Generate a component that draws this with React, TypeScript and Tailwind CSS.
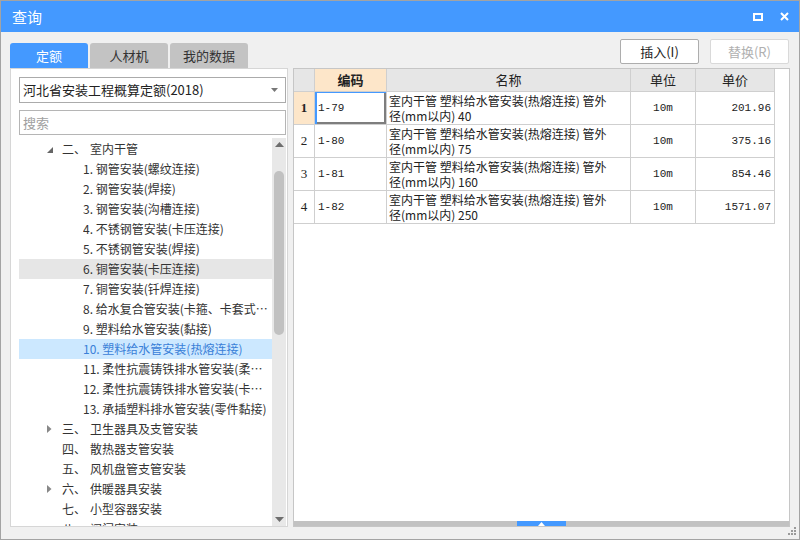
import React from "react";

const FONT = { fontFamily: '"Noto Sans CJK SC", "Noto Sans", sans-serif' };
const MONO = { fontFamily: '"Liberation Mono", "Noto Sans CJK SC", monospace' };

type Row =
  | { kind: "ch"; num: string; text: string; exp: "open" | "closed" | "none" }
  | { kind: "item"; text: string; state?: "hover" | "sel" };

const tree: Row[] = [
  { kind: "ch", num: "二、", text: "室内干管", exp: "open" },
  { kind: "item", text: "1. 钢管安装(螺纹连接)" },
  { kind: "item", text: "2. 钢管安装(焊接)" },
  { kind: "item", text: "3. 钢管安装(沟槽连接)" },
  { kind: "item", text: "4. 不锈钢管安装(卡压连接)" },
  { kind: "item", text: "5. 不锈钢管安装(焊接)" },
  { kind: "item", text: "6. 铜管安装(卡压连接)", state: "hover" },
  { kind: "item", text: "7. 铜管安装(钎焊连接)" },
  { kind: "item", text: "8. 给水复合管安装(卡箍、卡套式连接)" },
  { kind: "item", text: "9. 塑料给水管安装(黏接)" },
  { kind: "item", text: "10. 塑料给水管安装(热熔连接)", state: "sel" },
  { kind: "item", text: "11. 柔性抗震铸铁排水管安装(柔性接口)" },
  { kind: "item", text: "12. 柔性抗震铸铁排水管安装(卡箍连接)" },
  { kind: "item", text: "13. 承插塑料排水管安装(零件黏接)" },
  { kind: "ch", num: "三、", text: "卫生器具及支管安装", exp: "closed" },
  { kind: "ch", num: "四、", text: "散热器支管安装", exp: "none" },
  { kind: "ch", num: "五、", text: "风机盘管支管安装", exp: "none" },
  { kind: "ch", num: "六、", text: "供暖器具安装", exp: "closed" },
  { kind: "ch", num: "七、", text: "小型容器安装", exp: "none" },
  { kind: "ch", num: "八、", text: "阀门安装", exp: "none" },
];

const data = [
  { code: "1-79", d: "40", price: "201.96" },
  { code: "1-80", d: "75", price: "375.16" },
  { code: "1-81", d: "160", price: "854.46" },
  { code: "1-82", d: "250", price: "1571.07" },
];

function TreeRow({ r }: { r: Row }) {
  if (r.kind === "ch") {
    return (
      <div className="h-[20px] flex items-center pl-[28px] text-[12px] text-[#333] whitespace-nowrap">
        <div className="w-[15px] h-[20px] flex items-center">
          {r.exp === "open" && (
            <svg width="6" height="6" viewBox="0 0 6 6" className="mt-[1px]">
              <path d="M6 0 L6 6 L0 6 Z" fill="#666" />
            </svg>
          )}
          {r.exp === "closed" && (
            <svg width="5" height="8" viewBox="0 0 5 8">
              <path d="M0 0 L4.5 4 L0 8 Z" fill="#888" />
            </svg>
          )}
        </div>
        <span className="w-[28px]">{r.num}</span>
        <span>{r.text}</span>
      </div>
    );
  }
  const bg =
    r.state === "hover" ? "bg-[#e6e6e6]" : r.state === "sel" ? "bg-[#cce8ff]" : "";
  const color = r.state === "sel" ? "text-[#3a80d8]" : "text-[#333]";
  return (
    <div className={`h-[20px] flex items-center pl-[64px] pr-[4px] text-[12px] ${bg} ${color}`}>
      <span className="overflow-hidden text-ellipsis whitespace-nowrap">{r.text}</span>
    </div>
  );
}

export default function App() {
  return (
    <div
      className="relative w-[800px] h-[540px] border border-[#a3a3a3] bg-[#f0f0f0] flex flex-col overflow-hidden"
      style={FONT}
    >
      {/* Title bar */}
      <div className="h-[31px] bg-[#4499ff] flex items-center pl-[11px] pr-[10px] text-white shrink-0">
        <span className="text-[15px] leading-none">查询</span>
        <div className="ml-auto flex items-center gap-[17px]">
          <div className="w-[10px] h-[8px] border-2 border-white" />
          <svg width="9" height="9" viewBox="0 0 9 9">
            <path d="M1 1 L8 8 M8 1 L1 8" stroke="white" strokeWidth="2" />
          </svg>
        </div>
      </div>

      {/* Body */}
      <div className="flex-1 flex flex-col px-[9px] pt-[7px] pb-[12px] min-h-0">
        {/* toolbar */}
        <div className="h-[29px] flex shrink-0">
          <div className="flex items-end gap-[2px]">
            <div className="w-[78px] h-[25px] rounded-t-[3px] bg-[#4499ff] text-white text-[13px] flex items-center justify-center">
              定额
            </div>
            <div className="w-[78px] h-[25px] rounded-t-[3px] bg-[#c3c3c3] text-[#333] text-[13px] flex items-center justify-center">
              人材机
            </div>
            <div className="w-[78px] h-[25px] rounded-t-[3px] bg-[#c3c3c3] text-[#333] text-[13px] flex items-center justify-center">
              我的数据
            </div>
          </div>
          <div className="ml-auto flex items-start gap-[11px] pr-[1px]">
            <div className="w-[79px] h-[25px] bg-white border border-[#adadad] rounded-[2px] text-[13px] text-[#222] flex items-center justify-center">
              插入(I)
            </div>
            <div className="w-[79px] h-[25px] bg-white border border-[#d9d9d9] rounded-[2px] text-[13px] text-[#b0b0b0] flex items-center justify-center">
              替换(R)
            </div>
          </div>
        </div>

        {/* panels */}
        <div className="flex-1 flex gap-[5px] min-h-0">
          {/* left panel */}
          <div className="w-[278px] bg-white border border-[#d6d6d6] flex flex-col min-h-0">
            <div className="ml-[8px] mt-[8px] w-[267px] h-[26px] border border-[#ababab] flex items-center pl-[3px] pr-[7px] text-[13px] text-[#222] shrink-0">
              <span>河北省安装工程概算定额(2018)</span>
              <svg width="7" height="4" viewBox="0 0 7 4" className="ml-auto">
                <path d="M0 0 L7 0 L3.5 4 Z" fill="#777" />
              </svg>
            </div>
            <div className="ml-[8px] mt-[7px] w-[267px] h-[25px] border border-[#b5b5b5] flex items-center pl-[3px] text-[13px] text-[#a0a0a0] shrink-0">
              搜索
            </div>
            <div className="ml-[8px] mt-[3px] flex-1 flex min-h-0 overflow-hidden">
              <div className="w-[253px] pt-[1px] overflow-hidden">
                {tree.map((r, i) => (
                  <TreeRow key={i} r={r} />
                ))}
              </div>
              <div className="w-[14px] bg-[#e8e8e8] flex flex-col items-center">
                <svg width="9" height="5" viewBox="0 0 9 5" className="mt-[4px]">
                  <path d="M0 5 L4.5 0 L9 5 Z" fill="#6e6e6e" />
                </svg>
                <div className="mt-[24px] w-[10px] h-[164px] rounded-full bg-[#c1c1c1]" />
                <svg width="9" height="5" viewBox="0 0 9 5" className="mt-auto mb-[4px]">
                  <path d="M0 0 L9 0 L4.5 5 Z" fill="#6e6e6e" />
                </svg>
              </div>
            </div>
          </div>

          {/* right panel */}
          <div className="flex-1 bg-white border border-[#c6c6c6] flex flex-col min-h-0">
            <div className="flex-1 text-[12px] text-[#222]">
              {/* header */}
              <div className="flex h-[23px] w-[481px]">
                <div className="w-[21px] bg-[#e6e6e6] border-r border-b border-[#cfcfcf]" />
                <div className="w-[72px] bg-[#fde6c9] border-r border-b border-[#cfcfcf] flex items-center justify-center font-bold text-[13px]">
                  编码
                </div>
                <div className="w-[244px] bg-[#e6e6e6] border-r border-b border-[#cfcfcf] flex items-center justify-center text-[13px]">
                  名称
                </div>
                <div className="w-[65px] bg-[#e6e6e6] border-r border-b border-[#cfcfcf] flex items-center justify-center text-[13px]">
                  单位
                </div>
                <div className="w-[79px] bg-[#e6e6e6] border-r border-b border-[#cfcfcf] flex items-center justify-center text-[13px]">
                  单价
                </div>
              </div>
              {data.map((d, i) => (
                <div key={i} className="flex h-[33px] w-[481px]">
                  <div
                    className={`w-[21px] border-r border-b border-[#cfcfcf] flex items-center justify-center text-[13px] ${
                      i === 0 ? "bg-[#fde6c9] font-bold" : "bg-white"
                    }`}
                    style={{ fontFamily: '"Liberation Serif", serif' }}
                  >
                    {i + 1}
                  </div>
                  <div className="w-[72px] border-r border-b border-[#cfcfcf]">
                    <div
                      className={`h-full flex items-center pl-[3px] text-[11px] ${
                        i === 0
                          ? "shadow-[inset_2px_0_0_#4499ff,inset_0_1px_0_#4499ff,inset_-2px_0_0_#7e7e7e,inset_0_-2px_0_#7e7e7e]"
                          : ""
                      }`}
                      style={MONO}
                    >
                      {d.code}
                    </div>
                  </div>
                  <div className="w-[244px] border-r border-b border-[#cfcfcf] pl-[2px] pt-[1px] leading-[15px] whitespace-nowrap overflow-hidden">
                    <div>室内干管 塑料给水管安装(热熔连接) 管外</div>
                    <div>径(mm以内) {d.d}</div>
                  </div>
                  <div
                    className="w-[65px] border-r border-b border-[#cfcfcf] flex items-center justify-center text-[11px]"
                    style={MONO}
                  >
                    10m
                  </div>
                  <div
                    className="w-[79px] border-r border-b border-[#cfcfcf] flex items-center justify-end pr-[3px] text-[11px]"
                    style={MONO}
                  >
                    {d.price}
                  </div>
                </div>
              ))}
            </div>
            <div className="h-[5px] bg-[#c2c2c2] shrink-0 flex">
              <div className="ml-[223px] w-[49px] h-[5px] bg-[#4499ff] flex items-center justify-center">
                <svg width="7" height="4" viewBox="0 0 7 4">
                  <path d="M0 4 L3.5 0 L7 4 Z" fill="white" />
                </svg>
              </div>
            </div>
          </div>
        </div>
      </div>

      {/* resize grip */}
      <svg width="9" height="9" viewBox="0 0 9 9" className="absolute right-[2px] bottom-[3px]">
        <rect x="6" y="0" width="2" height="2" fill="#9a9a9a" />
        <rect x="3" y="3" width="2" height="2" fill="#9a9a9a" />
        <rect x="6" y="3" width="2" height="2" fill="#9a9a9a" />
        <rect x="0" y="6" width="2" height="2" fill="#9a9a9a" />
        <rect x="3" y="6" width="2" height="2" fill="#9a9a9a" />
        <rect x="6" y="6" width="2" height="2" fill="#9a9a9a" />
      </svg>
    </div>
  );
}
